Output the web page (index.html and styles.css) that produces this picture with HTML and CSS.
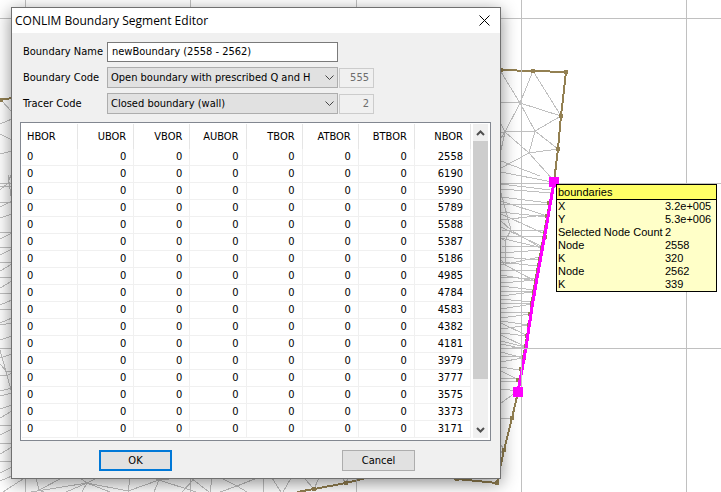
FILE: index.html
```html
<!DOCTYPE html>
<html lang="en">
<head>
<meta charset="utf-8">
<title>CONLIM Boundary Segment Editor</title>
<link rel="stylesheet" href="styles.css">
</head>
<body>
<main class="map">
  <svg class="mesh" aria-hidden="true">
    <g class="edges">
      <path d="M501 72L520 103L533 71L561 116L520 103L501 102M520 103L535 131L561 116M535 131L558 149L529 153L535 131L505 132L520 103M505 132L501 124M505 132L529 153L501 168M529 153L554 181M505 132L501 150M501 132H505M505 132L501 138M501 161L540 176M501 172L552 182M501 184L550 190M501 189L552 193M501 197L549 203M501 204L548 204M501 201L547 216M501 212L547 217M501 220L545 215M501 214L545 234M501 230L545 231M501 236L545 236M501 227L543 247M501 238L542 248M501 246L541 247M501 253L541 250M501 257L539 260M501 265L540 257M501 262L537 266M501 271L538 270M501 277L537 279M501 275L536 281M501 283L536 280M501 286L534 290M501 291L533 292M501 296L532 292M501 299L532 302M501 303L531 303M501 309L532 304M501 312L530 313M501 318L531 314M501 321L529 325M501 329L529 325M501 323L528 336M501 333L527 336M501 335L526 347M501 341L525 347M501 344L525 349M501 349L524 347M501 352L523 358M501 356L523 357M501 362L522 358M501 367L519 370M501 371L519 380M501 378L518 379M501 381H518M501 389L518 391M501 403L518 391M501 418H512M501 445L504 449L501 452M505 450L501 453M501 193L511 230L505 241V265L501 260M511 230L501 221M511 230L541 248M511 230L505 241L501 238M505 265L535 281"/>
      <path d="M1 100L12 112M0 124L12 119M0 134L12 140M0 154L12 151M0 183H8L0 190M0 186H12M8 175L12 203M8 183L12 172M0 202H12M0 207L12 201M0 218L12 214M0 232H12M0 239L12 233M0 247H12M0 255L12 249M0 262H12M0 271L12 264M0 277H12M0 288L12 281M0 293H12M0 305L12 300M0 309H12M0 323L12 318M0 325L12 323M0 340L12 336M0 350L2 357L11 390M0 358L12 354M0 364L7 372L12 371M0 375H8L12 373M0 391L12 388M0 396L12 393M0 409L12 405M0 418L12 411M0 425H12M0 435L12 429M0 443H12M0 454L12 447M0 461H12M0 473L12 467M0 481L12 476"/>
      <path d="M3 492L26 477M36 478L39 490L62 478M31 492L87 483L128 491L159 480L180 478M39 490L44 492M80 478L87 483L66 492M87 483L97 478M87 483L110 492M87 483L82 492M130 478L128 492M154 478L159 480L154 492M159 480L165 478M159 480L196 492M182 492L195 478M191 478L209 492M221 478L237 486L257 478M237 486L220 492M237 486L247 492M212 478L210 492M263 478L264 492M272 478L281 492M291 478L283 492M304 478L314 489L319 478M342 478L346 483L348 478"/>
    </g>
    <g class="boundary">
      <path d="M0 100L12 98M500 70L533 71L566 72L561 116L558 149L554 182L547 217L541 250L533 293L529 325L523 358L518 392L512 418L504 450L497 483L457 479L440 476M370 477L346 483L314 489L297 492"/>
      <path class="nodes" d="M1 100h0M501 70h0M533 71h0M566 72h0M561 116h0M558 149h0M549 203h0M547 216h0M545 237h0M542 248h0M540 259h0M538 270h0M536 281h0M534 292h0M532 303h0M530 314h0M529 325h0M527 336h0M526 347h0M524 358h0M521 369h0M518 380h0M512 418h0M504 450h0M497 483h0M457 479h0M346 483h0M314 489h0"/>
    </g>
    <path class="selection" d="M554 182L547 223L539 267L532 307L526 348L521 375L518 392"/>
    <path class="grid" d="M25.5 0V492M190.5 0V492M356.5 0V492M521.5 0V492M686.5 0V492M0 18.5H721M0 183.5H721M0 348.5H721"/>
    <path class="ends" d="M549 177h10v10h-10zM513 387h10v10h-10z"/>
  </svg>

  <section class="dialog" aria-labelledby="dialog-title">
    <header class="titlebar">
      <h1 id="dialog-title">CONLIM Boundary Segment Editor</h1>
      <button class="close" type="button" aria-label="Close"><svg width="11" height="11" viewBox="0 0 11 11"><path d="M.5.5l10 10M10.5.5l-10 10"/></svg></button>
    </header>
    <form class="content">
      <div class="fields">
        <label for="name">Boundary Name</label>
        <input id="name" class="name" type="text" value="newBoundary (2558 - 2562)">
        <label for="code">Boundary Code</label>
        <span class="picker"><select id="code"><option>Open boundary with prescribed Q and H</option></select><svg width="9" height="6" viewBox="0 0 9 6"><path d="M.5.5l4 4 4-4"/></svg></span>
        <input class="number" type="text" value="555" aria-label="Boundary code number" disabled>
        <label for="tracer">Tracer Code</label>
        <span class="picker"><select id="tracer"><option>Closed boundary (wall)</option></select><svg width="9" height="6" viewBox="0 0 9 6"><path d="M.5.5l4 4 4-4"/></svg></span>
        <input class="number" type="text" value="2" aria-label="Tracer code number" disabled>
      </div>
      <div class="list">
        <table>
          <thead><tr><th>HBOR</th><th>UBOR</th><th>VBOR</th><th>AUBOR</th><th>TBOR</th><th>ATBOR</th><th>BTBOR</th><th>NBOR</th></tr></thead>
          <tbody>
            <tr><td>0</td><td>0</td><td>0</td><td>0</td><td>0</td><td>0</td><td>0</td><td>2558</td></tr>
            <tr><td>0</td><td>0</td><td>0</td><td>0</td><td>0</td><td>0</td><td>0</td><td>6190</td></tr>
            <tr><td>0</td><td>0</td><td>0</td><td>0</td><td>0</td><td>0</td><td>0</td><td>5990</td></tr>
            <tr><td>0</td><td>0</td><td>0</td><td>0</td><td>0</td><td>0</td><td>0</td><td>5789</td></tr>
            <tr><td>0</td><td>0</td><td>0</td><td>0</td><td>0</td><td>0</td><td>0</td><td>5588</td></tr>
            <tr><td>0</td><td>0</td><td>0</td><td>0</td><td>0</td><td>0</td><td>0</td><td>5387</td></tr>
            <tr><td>0</td><td>0</td><td>0</td><td>0</td><td>0</td><td>0</td><td>0</td><td>5186</td></tr>
            <tr><td>0</td><td>0</td><td>0</td><td>0</td><td>0</td><td>0</td><td>0</td><td>4985</td></tr>
            <tr><td>0</td><td>0</td><td>0</td><td>0</td><td>0</td><td>0</td><td>0</td><td>4784</td></tr>
            <tr><td>0</td><td>0</td><td>0</td><td>0</td><td>0</td><td>0</td><td>0</td><td>4583</td></tr>
            <tr><td>0</td><td>0</td><td>0</td><td>0</td><td>0</td><td>0</td><td>0</td><td>4382</td></tr>
            <tr><td>0</td><td>0</td><td>0</td><td>0</td><td>0</td><td>0</td><td>0</td><td>4181</td></tr>
            <tr><td>0</td><td>0</td><td>0</td><td>0</td><td>0</td><td>0</td><td>0</td><td>3979</td></tr>
            <tr><td>0</td><td>0</td><td>0</td><td>0</td><td>0</td><td>0</td><td>0</td><td>3777</td></tr>
            <tr><td>0</td><td>0</td><td>0</td><td>0</td><td>0</td><td>0</td><td>0</td><td>3575</td></tr>
            <tr><td>0</td><td>0</td><td>0</td><td>0</td><td>0</td><td>0</td><td>0</td><td>3373</td></tr>
            <tr><td>0</td><td>0</td><td>0</td><td>0</td><td>0</td><td>0</td><td>0</td><td>3171</td></tr>
          </tbody>
        </table>
        <div class="scrollbar" aria-hidden="true">
          <svg width="15" height="17" viewBox="0 0 15 17"><path d="M4 11l3.5-3.5L11 11"/></svg>
          <div class="track"><div class="thumb"></div></div>
          <svg width="15" height="17" viewBox="0 0 15 17"><path d="M4 7l3.5 3.5L11 7"/></svg>
        </div>
      </div>
      <div class="actions">
        <button class="default" type="button">OK</button>
        <button type="button">Cancel</button>
      </div>
    </form>
  </section>

  <aside class="tip">
    <h2>boundaries</h2>
    <dl>
      <dt>X</dt><dd>3.2e+005</dd>
      <dt>Y</dt><dd>5.3e+006</dd>
      <dt>Selected Node Count</dt><dd>2</dd>
      <dt>Node</dt><dd>2558</dd>
      <dt>K</dt><dd>320</dd>
      <dt>Node</dt><dd>2562</dd>
      <dt>K</dt><dd>339</dd>
    </dl>
  </aside>
</main>
</body>
</html>
```
FILE: styles.css
```css
* { box-sizing: border-box; }
body { margin: 0; background: #fff; color: #000; font: 11px/16px "DejaVu Sans Condensed", "DejaVu Sans", sans-serif; }
h1, h2, dl, dd { margin: 0; font-weight: normal; }
input, select, button { margin: 0; border-radius: 0; color: inherit; font: inherit; }
svg { display: block; fill: none; }

.map { position: relative; min-height: 100vh; overflow: hidden; }
.mesh { position: absolute; inset: 0; width: 100%; height: 100%; shape-rendering: crispEdges; }
.edges { stroke: #c0c0c0; }
.boundary { stroke: #938052; stroke-width: 2; }
.nodes { stroke-width: 4; stroke-linecap: square; }
.selection { stroke: #f0f; stroke-width: 3; }
.ends { fill: #f0f; }
.grid { stroke: #c0c0c0; }

.dialog { position: absolute; left: 11px; top: 7px; width: 490px; border: 1px solid #707070; background: #f0f0f0; box-shadow: 0 4px 16px rgba(0, 0, 0, .45); }
.titlebar { display: flex; align-items: center; justify-content: space-between; height: 25px; padding: 0 10px 0 3px; background: #fff; }
.titlebar h1 { font: 12px/16px "Open Sans", sans-serif; }
.close { padding: 0; border: 0; background: none; }
.close svg { stroke: #000; }

.content { padding: 8px 9px 7px 8px; }
.fields { display: grid; grid-template-columns: 83px 231px 35px; gap: 5px 1px; align-items: center; padding-left: 3px; }
.fields > label { grid-column: 1; line-height: 21px; }
.name { width: 100%; height: 20px; padding: 0 4px; border: 1px solid #7a7a7a; background: #fff; }
.picker { display: grid; align-items: center; }
.picker select { grid-area: 1 / 1; width: 100%; height: 21px; padding: 0 20px 0 3px; border: 1px solid #adadad; background: #e1e1e1; appearance: none; }
.picker svg { grid-area: 1 / 1; justify-self: end; margin-right: 4px; stroke: #444; pointer-events: none; }
.number { width: 100%; height: 20px; padding: 0 4px; border: 1px solid #ccc; background: #f0f0f0; color: #6d6d6d; text-align: right; }

.list { display: flex; justify-content: space-between; margin-top: 8px; padding: 1px 2px 2px 1px; border: 1px solid #828790; background: #fff; }
table { width: 449px; border-collapse: separate; border-spacing: 0; table-layout: fixed; }
th, td { height: 17px; padding: 0 7px 0 0; border-right: 1px solid #f0f0f0; border-bottom: 1px solid #f0f0f0; font-weight: normal; line-height: 16px; text-align: right; }
th { height: 25px; border-right-color: #e5e5e5; border-bottom: 0; }
th:first-child, td:first-child { padding-left: 5px; text-align: left; }
.scrollbar { display: flex; flex-direction: column; width: 15px; background: #f0f0f0; }
.scrollbar svg { stroke: #505050; stroke-width: 2; }
.track { flex: 1; }
.thumb { height: 85%; background: #cdcdcd; }

.actions { display: flex; justify-content: space-between; padding: 9px 76px 0 79px; }
.actions button { width: 73px; height: 21px; padding: 0; border: 1px solid #adadad; background: #e1e1e1; }
.actions .default { border: 2px solid #0078d7; }

.tip { position: absolute; left: 556px; top: 184px; width: 161px; border: 1px solid #000; background: #ffffc8; font: 11px/13px "Liberation Sans", sans-serif; }
.tip h2 { padding: 1px; border-bottom: 1px solid #000; background: #ff6; font-size: 11px; line-height: 12px; }
.tip dl { display: grid; grid-template-columns: 107px 1fr; padding: 0 1px; }
```
